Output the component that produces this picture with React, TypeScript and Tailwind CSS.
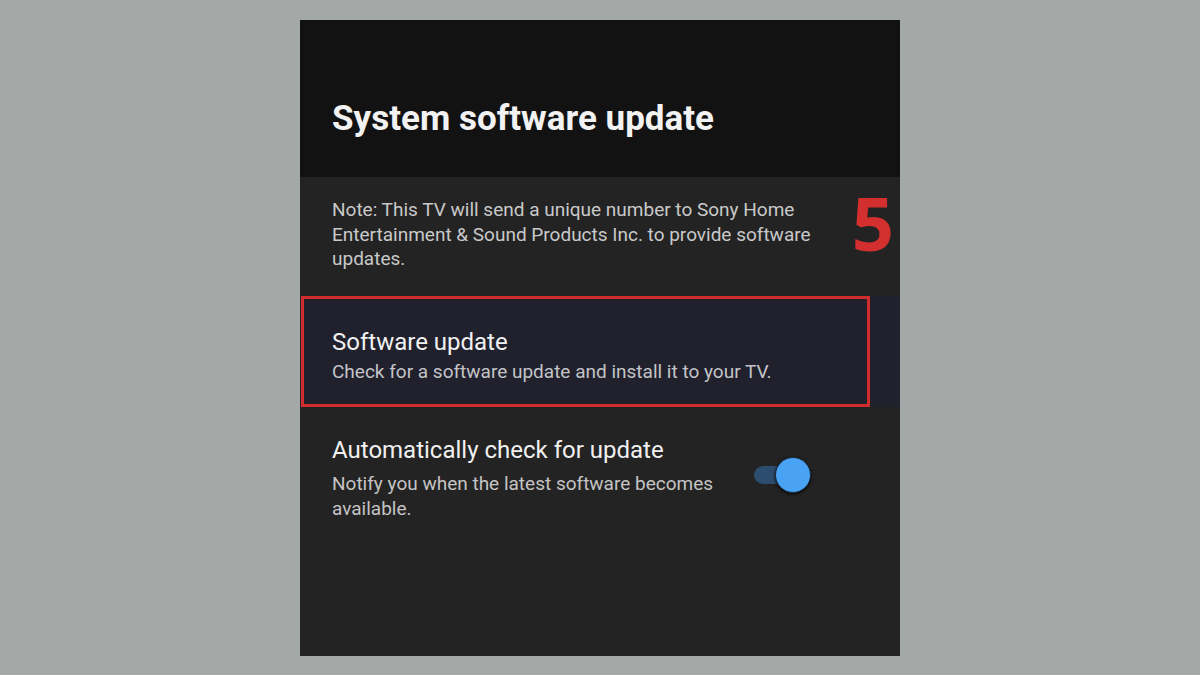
export default function App() {
  return (
    <div className="w-[1200px] h-[675px] bg-[#a4a8a7] flex justify-center pt-[20px] font-['Roboto',sans-serif]">
      <div className="w-[600px] h-[636px] bg-[#232323] flex flex-col relative">
        <div className="h-[157px] bg-[#121212] pl-[32px] pt-[79px]">
          <h1 className="text-[35px] leading-[40px] font-bold text-[#f2f2f2]">System software update</h1>
        </div>

        <div className="pl-[32px] pr-[60px] pt-[21px] h-[119px]">
          <p className="w-[490px] text-[19px] leading-[24.5px] text-[#c9c9c9]">
            Note: This TV will send a unique number to Sony Home Entertainment &amp; Sound Products Inc. to provide software updates.
          </p>
        </div>

        <div className="relative h-[111px] bg-[#20212d] pl-[32px] pt-[31px]">
          <div className="text-[24px] leading-[30px] text-[#f0f0f0]">Software update</div>
          <div className="text-[19px] leading-[24px] text-[#c4c4c8] mt-[3px]">Check for a software update and install it to your TV.</div>
          <div className="absolute left-[1px] top-0 w-[569px] h-[111px] border-[3px] border-[#d12d2d]" />
        </div>

        <div className="flex items-start pl-[32px] pt-[28px]">
          <div className="w-[400px]">
            <div className="text-[24px] leading-[30px] text-[#f0f0f0]">Automatically check for update</div>
            <div className="text-[19px] leading-[24.5px] text-[#c4c4c4] mt-[7px]">Notify you when the latest software becomes available.</div>
          </div>
          <div className="relative ml-[22px] mt-[22px] w-[58px] h-[36px]">
            <div className="absolute left-0 top-[9px] w-[46px] h-[18px] rounded-full bg-[#2d4d6e]" />
            <div className="absolute left-[21px] top-0 w-[36px] h-[36px] rounded-full bg-[#4aa2f5] shadow-[0_1px_3px_rgba(0,0,0,0.9)] border border-[#1a2a3a]" />
          </div>
        </div>

        <div className="absolute right-[6px] top-[166px] text-[74px] leading-none font-bold text-[#d32f2f] font-['Open_Sans',sans-serif]">5</div>
      </div>
    </div>
  )
}
